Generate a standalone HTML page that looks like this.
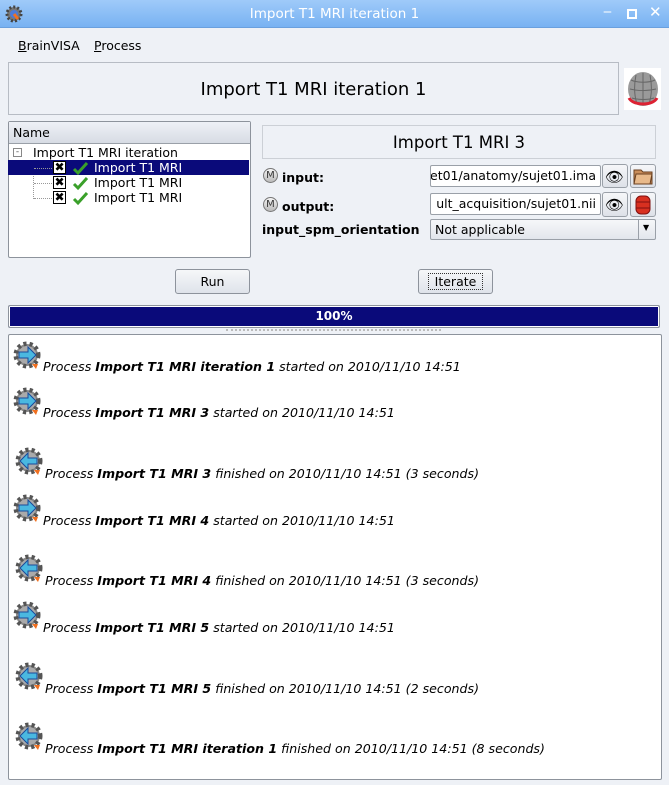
<!DOCTYPE html>
<html><head><meta charset="utf-8"><style>
*{margin:0;padding:0;box-sizing:border-box}
body{width:669px;height:785px;background:#eef1f6;font-family:"DejaVu Sans","Liberation Sans",sans-serif;font-size:12.5px;color:#000;position:relative;overflow:hidden}
.a{position:absolute}
.tb{left:0;top:0;width:669px;height:28px;background:linear-gradient(#9fcaf9,#78b2f2);border-bottom:1px solid #6aa0de}
.btn{background:linear-gradient(#f6f7f9,#dfe3ea);border:1px solid #8d939c;border-radius:3px;text-align:center;line-height:23px}
.field{background:#fff;border:1px solid #9aa0a8;border-radius:2px;overflow:hidden;white-space:nowrap;direction:rtl;line-height:20px;padding:0 4px}
.ib{background:linear-gradient(#f6f7f9,#dde1e8);border:1px solid #9aa0a8;border-radius:3px}
.log{font-style:italic;font-size:12.6px;white-space:nowrap}
.log b{font-style:italic}
.m{width:15px;height:15px;border:1px solid #777;border-radius:50%;background:linear-gradient(#f5f5f5,#bbb);font-size:10px;text-align:center;line-height:13px;color:#333}
</style></head><body>
<div class="a tb"></div>
<svg class="a" style="left:5px;top:5px" width="18" height="18" viewBox="0 0 18 18"><circle cx="9" cy="9" r="7" fill="#777" stroke="#444" stroke-dasharray="2 2" stroke-width="3"/><circle cx="9" cy="9" r="4" fill="#4b7bd8"/><path d="M9 9l4 5" stroke="#f07020" stroke-width="3"/></svg>
<div class="a" style="left:0;width:669px;top:6px;text-align:center;color:#fff;font-size:13.5px">Import T1 MRI iteration 1</div>
<div class="a" style="left:603px;top:4px;color:#fff;font-size:14px">‒</div>
<div class="a" style="left:627px;top:9px;width:10px;height:10px;border:2px solid #fff"></div>
<div class="a" style="left:649px;top:3px;color:#fff;font-size:15px">✕</div>
<div class="a" style="left:18px;top:38px"><u>B</u>rainVISA</div>
<div class="a" style="left:94px;top:38px"><u>P</u>rocess</div>
<div class="a" style="left:8px;top:62px;width:611px;height:53px;border:1px solid #b7bcc4;background:#eef1f6;font-size:18px;text-align:center;line-height:53px">Import T1 MRI iteration 1</div>
<div class="a" style="left:624px;top:68px;width:37px;height:42px;background:#fff"></div>
<svg class="a" style="left:626px;top:70px" width="34" height="38" viewBox="0 0 34 38"><ellipse cx="17" cy="19" rx="15" ry="17" fill="#9a9a9a"/><path d="M5 10c6 3 18 3 24 0M4 19c8 2 18 2 26 0M6 28c6 2 16 2 22 0M17 3v32M10 5c-2 10-2 20 1 29M24 5c2 10 2 20-1 29" stroke="#666" fill="none"/><path d="M3 28c4 8 24 8 28 0" stroke="#d23" stroke-width="3" fill="none"/></svg>
<!-- tree -->
<div class="a" style="left:8px;top:121px;width:243px;height:137px;background:#fff;border:1px solid #8d939c;border-radius:2px"></div>
<div class="a" style="left:9px;top:122px;width:241px;height:22px;background:linear-gradient(#eef1f6,#d7dce4);border-bottom:1px solid #9aa0a8;padding-left:4px;line-height:22px">Name</div>
<div class="a" style="left:13px;top:148px;width:9px;height:9px;border:1px solid #888;font-size:9px;line-height:6px;text-align:center;color:#555">-</div>
<div class="a" style="left:33px;top:145px">Import T1 MRI iteration</div>
<div class="a" style="left:33px;top:165px;width:1px;height:34px;border-left:1px dotted #999"></div>
<div class="a" style="left:8px;top:160px;width:241px;height:15px;background:#0a0a7a"></div>
<div class="a" style="left:34px;top:168px;width:18px;border-top:1px dotted #999"></div>
<div class="a" style="left:34px;top:183px;width:18px;border-top:1px dotted #999"></div>
<div class="a" style="left:34px;top:198px;width:18px;border-top:1px dotted #999"></div>
<div class="a" style="left:53px;top:161px;width:13px;height:13px;background:#fff;border:1px solid #000;font-size:12px;line-height:11px;text-align:center;font-weight:bold">✖</div>
<div class="a" style="left:53px;top:176px;width:13px;height:13px;background:#fff;border:1px solid #000;font-size:12px;line-height:11px;text-align:center;font-weight:bold">✖</div>
<div class="a" style="left:53px;top:191px;width:13px;height:13px;background:#fff;border:1px solid #000;font-size:12px;line-height:11px;text-align:center;font-weight:bold">✖</div>
<svg class="a" style="left:72px;top:161px" width="16" height="45" viewBox="0 0 16 45"><g fill="none" stroke="#3aa02a" stroke-width="3"><path d="M2 8l4 4 9-10"/><path d="M2 23l4 4 9-10"/><path d="M2 38l4 4 9-10"/></g></svg>
<div class="a" style="left:94px;top:160px;color:#fff">Import T1 MRI</div>
<div class="a" style="left:94px;top:175px">Import T1 MRI</div>
<div class="a" style="left:94px;top:190px">Import T1 MRI</div>
<!-- right -->
<div class="a" style="left:262px;top:125px;width:394px;height:34px;border:1px solid #ccd0d6;font-size:16.5px;text-align:center;line-height:33px">Import T1 MRI 3</div>
<div class="a m" style="left:263px;top:168px">M</div>
<div class="a" style="left:282px;top:170px;font-weight:bold">input:</div>
<div class="a field" style="left:430px;top:165px;width:171px;height:22px"><span style="direction:ltr;unicode-bidi:embed">et01/anatomy/sujet01.ima</span></div>
<div class="a ib" style="left:602px;top:164px;width:26px;height:24px"></div>
<div class="a" style="left:605px;top:168px;font-size:15px">👁</div>
<div class="a ib" style="left:630px;top:164px;width:26px;height:24px"></div>
<svg class="a" style="left:632px;top:166px" width="22" height="20"><path d="M2 4h7l2 2h9v12H2z" fill="#c98d5a" stroke="#6a4020"/><path d="M4 8h16l-2 10H2z" fill="#e8b98a" stroke="#6a4020"/></svg>
<div class="a m" style="left:263px;top:197px">M</div>
<div class="a" style="left:282px;top:199px;font-weight:bold">output:</div>
<div class="a field" style="left:430px;top:193px;width:171px;height:22px"><span style="direction:ltr;unicode-bidi:embed">ult_acquisition/sujet01.nii</span></div>
<div class="a ib" style="left:602px;top:192px;width:26px;height:25px"></div>
<div class="a" style="left:605px;top:196px;font-size:15px">👁</div>
<div class="a ib" style="left:630px;top:192px;width:26px;height:25px"></div>
<svg class="a" style="left:634px;top:194px" width="18" height="22"><rect x="2" y="2" width="14" height="18" rx="5" fill="#d83020" stroke="#801010"/><path d="M2 8h14M2 14h14" stroke="#801010"/></svg>
<div class="a" style="left:262px;top:222px;width:165px;overflow:hidden;white-space:nowrap;font-weight:bold">input_spm_orientation</div>
<div class="a" style="left:430px;top:219px;width:226px;height:21px;border:1px solid #9aa0a8;border-radius:2px;background:linear-gradient(#f6f7f9,#e2e6ec);padding-left:4px;line-height:19px">Not applicable</div>
<div class="a" style="left:638px;top:220px;width:1px;height:19px;background:#9aa0a8"></div>
<div class="a" style="left:643px;top:223px;font-size:8px">▼</div>
<div class="a btn" style="left:175px;top:269px;width:75px;height:25px">Run</div>
<div class="a btn" style="left:418px;top:269px;width:75px;height:25px"><span style="outline:1px dotted #333;padding:0 6px">Iterate</span></div>
<div class="a" style="left:8px;top:305px;width:652px;height:23px;border:1px solid #8d939c;border-radius:2px;background:#0a0a7a;box-shadow:inset 0 0 0 1px #fff"></div>
<div class="a" style="left:8px;top:309px;width:652px;text-align:center;color:#fff;font-weight:bold;font-size:12px">100%</div>
<div class="a" style="left:226px;top:329px;width:215px;border-top:2px dotted #bbb"></div>
<div class="a" style="left:8px;top:334px;width:654px;height:446px;background:#fff;border:1px solid #8d939c;border-radius:2px"></div>
<svg width="0" height="0" style="position:absolute"><defs>
<g id="gs"><circle cx="14" cy="14" r="11" fill="#888" stroke="#555" stroke-width="5" stroke-dasharray="3 3"/><circle cx="14" cy="14" r="9" fill="#aaa"/><path d="M6 11h9v-5l8 8-8 8v-5H6z" fill="#4ab8e0" stroke="#1a4a9a"/><path d="M19 23l4 5 2-5z" fill="#f07020"/></g>
<g id="gf"><circle cx="14" cy="14" r="11" fill="#888" stroke="#555" stroke-width="5" stroke-dasharray="3 3"/><circle cx="14" cy="14" r="9" fill="#aaa"/><path d="M22 11h-9v-5l-8 8 8 8v-5h9z" fill="#4ab8e0" stroke="#1a4a9a"/><path d="M19 23l4 5 2-5z" fill="#f07020"/></g>
</defs></svg>
<svg class="a" style="left:13px;top:341px" width="30" height="30"><use href="#gs"/></svg>
<div class="a log" style="left:43px;top:359px">Process <b>Import T1 MRI iteration 1</b> started on 2010/11/10 14:51</div>
<svg class="a" style="left:13px;top:387px" width="30" height="30"><use href="#gs"/></svg>
<div class="a log" style="left:43px;top:405px">Process <b>Import T1 MRI 3</b> started on 2010/11/10 14:51</div>
<svg class="a" style="left:15px;top:447px" width="30" height="30"><use href="#gf"/></svg>
<div class="a log" style="left:45px;top:466px">Process <b>Import T1 MRI 3</b> finished on 2010/11/10 14:51 (3 seconds)</div>
<svg class="a" style="left:13px;top:494px" width="30" height="30"><use href="#gs"/></svg>
<div class="a log" style="left:43px;top:513px">Process <b>Import T1 MRI 4</b> started on 2010/11/10 14:51</div>
<svg class="a" style="left:15px;top:554px" width="30" height="30"><use href="#gf"/></svg>
<div class="a log" style="left:45px;top:573px">Process <b>Import T1 MRI 4</b> finished on 2010/11/10 14:51 (3 seconds)</div>
<svg class="a" style="left:13px;top:601px" width="30" height="30"><use href="#gs"/></svg>
<div class="a log" style="left:43px;top:620px">Process <b>Import T1 MRI 5</b> started on 2010/11/10 14:51</div>
<svg class="a" style="left:15px;top:662px" width="30" height="30"><use href="#gf"/></svg>
<div class="a log" style="left:45px;top:681px">Process <b>Import T1 MRI 5</b> finished on 2010/11/10 14:51 (2 seconds)</div>
<svg class="a" style="left:15px;top:722px" width="30" height="30"><use href="#gf"/></svg>
<div class="a log" style="left:45px;top:741px">Process <b>Import T1 MRI iteration 1</b> finished on 2010/11/10 14:51 (8 seconds)</div>
</body></html>
